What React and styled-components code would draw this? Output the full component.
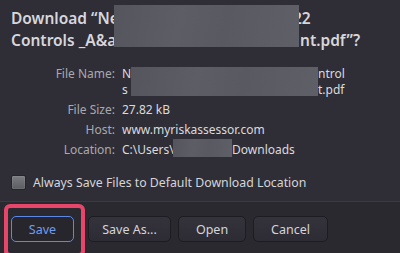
import React from "react";
import styled, { createGlobalStyle } from "styled-components";

const Global = createGlobalStyle`
  html, body {
    margin: 0;
    padding: 0;
    background: #2f2e36;
  }
  body {
    font-family: "Noto Sans", "Open Sans", sans-serif;
    -webkit-font-smoothing: antialiased;
  }
`;

const Dialog = styled.div`
  width: 400px;
  height: 253px;
  display: flex;
  flex-direction: column;
  background: #2f2e36;
  color: #dcdce0;
  overflow: hidden;
`;

const Body = styled.div`
  padding: 7px 11px 0 11px;
  display: flex;
  flex-direction: column;
`;

const Title = styled.div`
  position: relative;
  font-size: 15.5px;
  font-weight: 600;
  line-height: 22px;
  color: #d6d6dc;
  white-space: nowrap;
`;

/* left part of a line that is partly hidden; width sets where the tail starts */
const Lead = styled.span`
  display: inline-block;
  width: ${(p) => p.w}px;
  overflow: hidden;
  vertical-align: top;
`;

const Redaction = styled.div`
  position: absolute;
  left: ${(p) => p.x}px;
  top: ${(p) => p.y}px;
  width: ${(p) => p.w}px;
  height: ${(p) => p.h}px;
  background: linear-gradient(100deg, #55565d 0%, #5d5e65 35%, #595a61 60%, #5f6067 100%);
`;

const Details = styled.div`
  position: relative;
  margin-top: 15px;
  display: grid;
  grid-template-columns: 104px 1fr;
  column-gap: 7px;
  row-gap: 4px;
  font-size: 12px;
  line-height: 16px;
`;

const Label = styled.div`
  text-align: right;
  color: #a9a9b0;
`;

const Value = styled.div`
  color: #dadade;
  white-space: nowrap;
`;

const CheckRow = styled.label`
  display: flex;
  align-items: center;
  gap: 7px;
  margin-top: 16px;
  font-size: 12.3px;
  color: #d4d4da;
`;

const Box = styled.span`
  width: 15px;
  height: 15px;
  box-sizing: border-box;
  border: 1px solid #25242b;
  border-radius: 2px;
  background: linear-gradient(180deg, #7b7b82 0%, #5b5b62 100%);
  box-shadow: inset 0 0 0 1px rgba(255, 255, 255, 0.08);
`;

const Footer = styled.div`
  margin-top: 10px;
  border-top: 1px solid #3b3a42;
  background: #2a2930;
  flex: 1;
  display: flex;
  align-items: flex-start;
  padding: 14px 0 0 11px;
  gap: 7px;
`;

const Highlight = styled.div`
  position: relative;
  margin-right: 7px;

  &::after {
    content: "";
    position: absolute;
    left: -7px;
    top: -12px;
    right: -11px;
    bottom: -15px;
    border: 4px solid #e8456b;
    border-radius: 6px;
  }
`;

const Button = styled.button`
  height: 26px;
  box-sizing: border-box;
  padding: 0;
  width: ${(p) => p.w}px;
  font-family: inherit;
  font-size: 12.5px;
  border-radius: 5px;
  border: 1px solid ${(p) => (p.primary ? "#5f88e6" : "#1d1c22")};
  background: ${(p) =>
    p.primary ? "#27262d" : "linear-gradient(180deg, #34333b 0%, #2d2c34 100%)"};
  color: ${(p) => (p.primary ? "#6f9cf2" : "#d4d4da")};
`;

export default function App() {
  return (
    <Dialog>
      <Global />
      <Body>
        <Title>
          <div>
            <Lead w={282}>Download “Ne</Lead>22
          </div>
          <div>
            <Lead w={289}>Controls _A&amp;a</Lead>nt.pdf”?
          </div>
          <Redaction x={103} y={-2} w={185} h={42} />
        </Title>
        <Details>
          <Label>File Name:</Label>
          <Value>
            <div>
              <Lead w={196}>N</Lead>ntrol
            </div>
            <div>
              <Lead w={196}>s</Lead>t.pdf
            </div>
          </Value>
          <Label>File Size:</Label>
          <Value>27.82 kB</Value>
          <Label>Host:</Label>
          <Value>www.myriskassessor.com</Value>
          <Label>Location:</Label>
          <Value>
            <Lead w={110}>C:\Users\</Lead>Downloads
          </Value>
          <Redaction x={120} y={1} w={187} h={29} />
          <Redaction x={162} y={73} w={59} h={18} />
        </Details>
        <CheckRow>
          <Box />
          Always Save Files to Default Download Location
        </CheckRow>
      </Body>
      <Footer>
        <Highlight>
          <Button primary w={63}>
            Save
          </Button>
        </Highlight>
        <Button w={83}>Save As...</Button>
        <Button w={68}>Open</Button>
        <Button w={75}>Cancel</Button>
      </Footer>
    </Dialog>
  );
}
